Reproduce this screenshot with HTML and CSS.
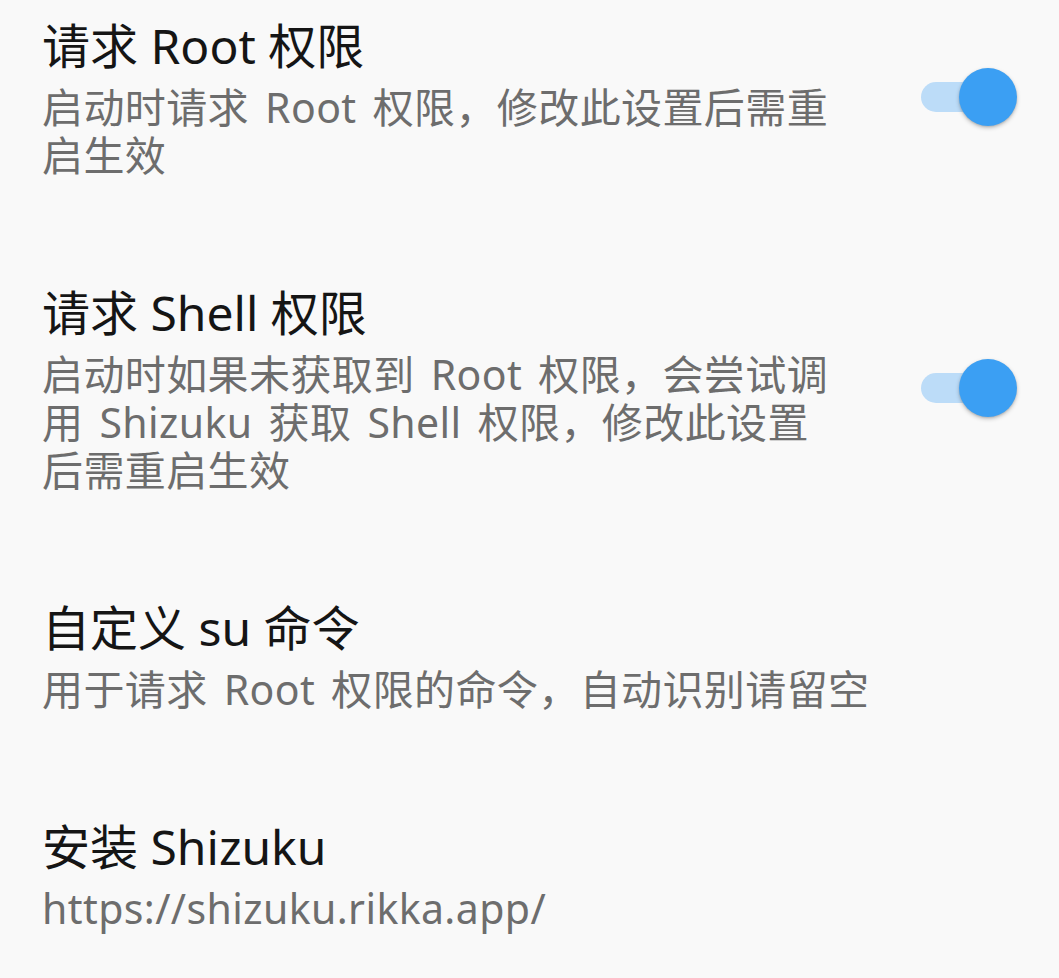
FILE: index.html
```html
<!DOCTYPE html>
<html lang="zh-CN">
<head>
<meta charset="utf-8">
<title>设置</title>
<link rel="stylesheet" href="styles.css">
</head>
<body>
<div class="list">
  <div class="item">
    <div class="text">
      <div class="title">请求 Root 权限</div>
      <div class="summary">启动时请求 Root 权限，修改此设置后需重<br>启生效</div>
    </div>
    <div class="switch on"><span class="track"></span><span class="thumb"></span></div>
  </div>
  <div class="item">
    <div class="text">
      <div class="title">请求 Shell 权限</div>
      <div class="summary">启动时如果未获取到 Root 权限，会尝试调<br>用 Shizuku 获取 Shell 权限，修改此设置<br>后需重启生效</div>
    </div>
    <div class="switch on"><span class="track"></span><span class="thumb"></span></div>
  </div>
  <div class="item">
    <div class="text">
      <div class="title">自定义 su 命令</div>
      <div class="summary">用于请求 Root 权限的命令，自动识别请留空</div>
    </div>
  </div>
  <div class="item">
    <div class="text">
      <div class="title">安装 Shizuku</div>
      <div class="summary">https://shizuku.rikka.app/</div>
    </div>
  </div>
</div>
</body>
</html>
```
FILE: styles.css
```css
html, body {
  margin: 0;
  padding: 0;
  background: #f9f9f9;
}
body {
  font-family: "Noto Sans", "Noto Sans CJK SC", sans-serif;
  width: 1059px;
  height: 978px;
  overflow: hidden;
}
.list {
  display: flex;
  flex-direction: column;
  margin-top: -36px;
}
.item {
  display: flex;
  align-items: center;
  padding: 52px 42px 52px 42px;
}
.text {
  flex: 1;
  min-width: 0;
  white-space: nowrap;
}
.title {
  font-size: 48px;
  line-height: 60px;
  color: #151515;
}
.summary {
  margin-top: 7px;
  font-size: 41px;
  line-height: 48px;
  color: #6d6d6d;
  letter-spacing: 0.4px;
  word-spacing: 5px;
}
.switch {
  position: relative;
  width: 96px;
  height: 60px;
  flex: none;
}
.track {
  position: absolute;
  left: 0;
  top: 14px;
  width: 84px;
  height: 30px;
  border-radius: 15px;
  background: #bcdcf8;
}
.thumb {
  position: absolute;
  right: 0;
  top: 0;
  width: 58px;
  height: 58px;
  border-radius: 50%;
  background: #3b9ff3;
  box-shadow: 0 2px 4px rgba(0, 0, 0, 0.22), 0 1px 2px rgba(0, 0, 0, 0.12);
}
```
